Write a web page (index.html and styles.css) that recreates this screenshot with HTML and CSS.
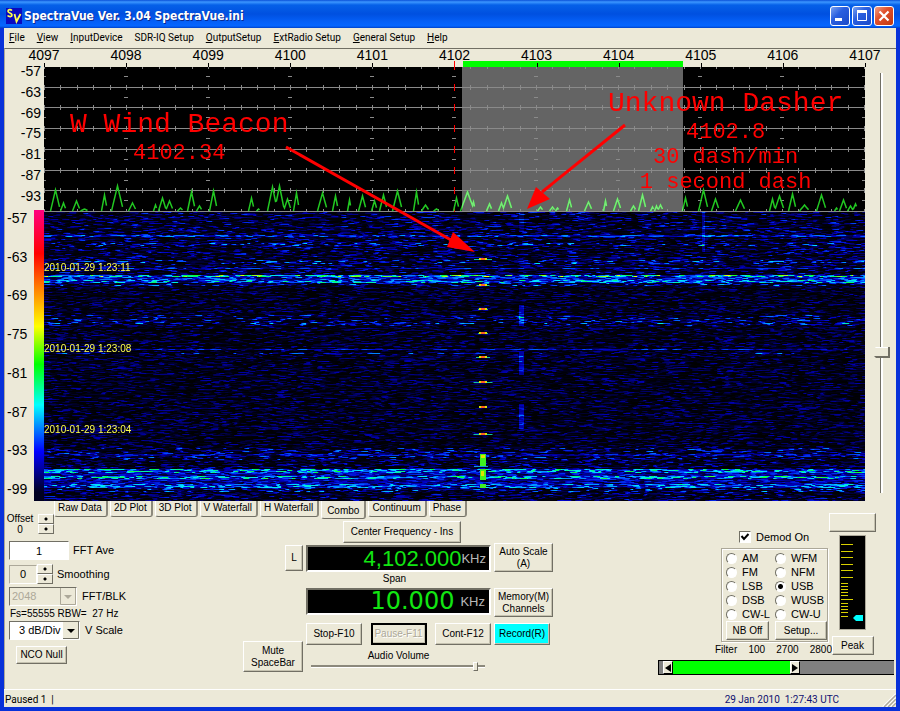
FILE: index.html
```html
<!DOCTYPE html>
<html lang="en">
<head>
  <meta charset="UTF-8" />
  <meta name="viewport" content="width=device-width, initial-scale=1.0" />
  <title>SpectraVue Ver. 3.04 SpectraVue.ini</title>
  <link rel="stylesheet" href="styles.css">
</head>
<body>
  <div class="window">
    <header class="titlebar">
      <svg class="logo" width="16" height="16" viewBox="0 0 16 16">
        <rect width="16" height="16" fill="#0a0ac0" />
        <path d="M6 2.5C4.5 1 2 1.5 2 3.3S6 5 6 7 3 9 1.500 7.500" fill="none" stroke="#ffff50" stroke-width="1.700" />
        <path d="M8.500 6l2 7.500L14.500 6" fill="none" stroke="#ffff50" stroke-width="1.800" />
      </svg>
      <h1>SpectraVue Ver. 3.04 SpectraVue.ini</h1>
      <div class="win-buttons">
        <button class="win-btn" aria-label="Minimize"><svg width="18" height="18" viewBox="0 0 18 18"><rect x="4" y="11" width="7" height="3" fill="#fff" /></svg></button>
        <button class="win-btn" aria-label="Maximize"><svg width="18" height="18" viewBox="0 0 18 18"><path d="M4.500 4v9.500h9V4" fill="none" stroke="#fff" /><rect x="4" y="3" width="10" height="3" fill="#fff" /></svg></button>
        <button class="win-btn close" aria-label="Close"><svg width="18" height="18" viewBox="0 0 18 18"><path d="M4.500 4.500l9 9M13.500 4.500l-9 9" stroke="#fff" stroke-width="2.200" /></svg></button>
      </div>
    </header>

    <nav class="menu">
      <a href="#"><u>F</u>ile</a>
      <a href="#"><u>V</u>iew</a>
      <a href="#"><u>I</u>nputDevice</a>
      <a href="#">SDR-IQ Setup</a>
      <a href="#"><u>O</u>utputSetup</a>
      <a href="#"><u>E</u>xtRadio Setup</a>
      <a href="#"><u>G</u>eneral Setup</a>
      <a href="#"><u>H</u>elp</a>
    </nav>

    <main>
      <section class="scope">
        <div class="scales">
          <div class="db-top">
            <span>-57</span><span>-63</span><span>-69</span><span>-75</span><span>-81</span><span>-87</span><span>-93</span>
          </div>
          <div class="db-bottom">
            <div class="db-list">
              <span>-57</span><span>-63</span><span>-69</span><span>-75</span><span>-81</span><span>-87</span><span>-93</span><span>-99</span>
            </div>
            <div class="palette"></div>
          </div>
        </div>

        <div class="plots">
          <div class="ruler">
            <div class="passband"></div>
            <span>4097</span><span>4098</span><span>4099</span><span>4100</span><span>4101</span><span class="tuned">4102</span><span>4103</span><span>4104</span><span>4105</span><span>4106</span><span>4107</span>
          </div>
          <div class="screen">
            <canvas id="spectrum" width="821" height="145"></canvas>
            <canvas id="waterfall" width="821" height="289"></canvas>
            <span class="stamp stamp-1">2010-01-29 1:23:11</span>
            <span class="stamp stamp-2">2010-01-29 1:23:08</span>
            <span class="stamp stamp-3">2010-01-29 1:23:04</span>
            <svg class="arrows" width="821" height="434" viewBox="0 0 821 434">
              <path d="M242 80L407 173M581 58L498 125" stroke="#f00" stroke-width="3" />
              <path d="M431 185L409 165L403 180ZM483 142L492 120L506 132Z" fill="#f00" />
            </svg>
            <div class="note note-beacon">
              <h2>W Wind Beacon</h2>
              <p>4102.34</p>
            </div>
            <div class="note note-dasher">
              <h2>Unknown Dasher</h2>
              <p>4102.8</p>
              <p>30 dash/min</p>
              <p>1 second dash</p>
            </div>
          </div>
        </div>

        <div class="gain">
          <input type="range" class="gain-slider" aria-label="Gain" min="0" max="100" value="67">
        </div>
      </section>

      <section class="controls">
        <div class="tabs">
          <button>Raw Data</button>
          <button>2D Plot</button>
          <button>3D Plot</button>
          <button>V Waterfall</button>
          <button>H Waterfall</button>
          <button class="active">Combo</button>
          <button>Continuum</button>
          <button>Phase</button>
        </div>

        <div class="panels">
          <div class="fft">
            <div class="line offset">
              <div class="offset-text">Offset<br>0</div>
              <div class="spin"><button aria-label="Offset up"></button><button aria-label="Offset down"></button></div>
            </div>
            <div class="line ave">
              <input type="text" id="fftAve" value="1">
              <label for="fftAve">FFT Ave</label>
            </div>
            <div class="line smooth">
              <input type="text" id="smoothing" value="0" readonly>
              <div class="spin"><button aria-label="Smoothing up"></button><button aria-label="Smoothing down"></button></div>
              <label for="smoothing">Smoothing</label>
            </div>
            <div class="line blk">
              <select id="fftBlk" disabled><option>2048</option></select>
              <label for="fftBlk">FFT/BLK</label>
            </div>
            <p class="rbw">Fs=55555 RBW=&nbsp; 27 Hz</p>
            <div class="line vscale">
              <select id="vScale"><option>3 dB/Div</option></select>
              <label for="vScale">V Scale</label>
            </div>
            <button class="btn nco">NCO Null</button>
          </div>

          <div class="tuning">
            <div class="tune-side">
              <button class="btn lock">L</button>
              <button class="btn mute">Mute<br>SpaceBar</button>
            </div>
            <div class="tune-mid">
              <button class="btn center-btn">Center Frequency - Ins</button>
              <div class="display"><span class="freq">4,102.000</span><span class="unit">KHz</span></div>
              <p class="span-label">Span</p>
              <div class="display"><span class="span-value">10.000</span><span class="unit unit-span">KHz</span></div>
              <div class="transport">
                <button class="btn">Stop-F10</button>
                <button class="btn default" disabled>Pause-F11</button>
                <button class="btn">Cont-F12</button>
              </div>
              <label class="volume-label" for="volume">Audio Volume</label>
              <input type="range" id="volume" class="volume" min="0" max="100" value="96">
            </div>
            <div class="tune-right">
              <button class="btn two-line">Auto Scale<br>(A)</button>
              <button class="btn two-line memory">Memory(M)<br>Channels</button>
              <button class="btn record">Record(R)</button>
            </div>
          </div>

          <div class="receiver">
            <div class="rx-top">
              <div class="demod">
                <label class="demod-on"><input type="checkbox" checked>Demod On</label>
                <fieldset class="modes">
                  <div class="mode-grid">
                    <label><input type="radio" name="mode">AM</label>
                    <label><input type="radio" name="mode">WFM</label>
                    <label><input type="radio" name="mode">FM</label>
                    <label><input type="radio" name="mode">NFM</label>
                    <label><input type="radio" name="mode">LSB</label>
                    <label><input type="radio" name="mode" checked>USB</label>
                    <label><input type="radio" name="mode">DSB</label>
                    <label><input type="radio" name="mode">WUSB</label>
                    <label><input type="radio" name="mode">CW-L</label>
                    <label><input type="radio" name="mode">CW-U</label>
                  </div>
                  <div class="mode-buttons">
                    <button class="btn">NB Off</button>
                    <button class="btn">Setup...</button>
                  </div>
                </fieldset>
                <div class="filter-text"><span>Filter</span><span>100</span><span>2700</span><span>2800</span></div>
              </div>
              <div class="level">
                <button class="btn blank" aria-label="Level"></button>
                <svg class="meter" width="27" height="95" viewBox="0 0 27 95">
                  <rect width="27" height="95" fill="#aca899" />
                  <rect x="1" y="1" width="25" height="93" fill="#000" />
                  <path d="M2 9.500h12M2 16.500h12M2 22.500h12M2 29.500h12M2 35.500h12M2 42.500h12M2 64.500h12M2 48.500h7M2 51.500h7M2 54.500h7M2 57.500h7M2 60.500h7M2 68.500h7M2 71.500h7M2 74.500h7M2 77.500h7M2 81.500h7" stroke="#d8d000" />
                  <path d="M14 83l3-3h7v6h-7z" fill="#0ff" />
                </svg>
                <button class="btn peak">Peak</button>
              </div>
            </div>
            <div class="filter-bar">
              <button class="handle" aria-label="Low cut"><svg width="6" height="8" viewBox="0 0 6 8"><path d="M6 0v8L0 4z" /></svg></button>
              <div class="filter-pass"></div>
              <button class="handle" aria-label="High cut"><svg width="6" height="8" viewBox="0 0 6 8"><path d="M0 0v8l6-4z" /></svg></button>
            </div>
          </div>
        </div>
      </section>
    </main>

    <footer class="status">
      <span>Paused 1 &nbsp;|</span>
      <time>29 Jan 2010 &nbsp;1:27:43 UTC</time>
      <svg class="grip" width="14" height="14" viewBox="0 0 14 14">
        <path d="M1 14L14 1M5 14l9-9M9 14l5-5" stroke="#fff" stroke-width="2" />
        <path d="M2 14L14 2M6 14l8-8M10 14l4-4" stroke="#aca899" stroke-width="1.500" />
      </svg>
    </footer>
  </div>
  <script src="script.js"></script>
</body>
</html>
```

FILE: styles.css
```css
* {
  box-sizing: border-box;
}

body {
  margin: 0;
  background: #0831d9;
  color: #000;
  font-family: 'Liberation Sans', Arial, sans-serif;
  font-size: 11px;
  line-height: 13px;
}

h1, h2, p {
  margin: 0;
}

button, input, select {
  font: inherit;
  color: inherit;
  margin: 0;
}

.window {
  display: flex;
  flex-direction: column;
  min-height: 100vh;
  border: 4px solid #0831d9;
  border-top: none;
  background: #ece9d8;
}

/* Title bar */
.titlebar {
  display: flex;
  align-items: center;
  gap: 2px;
  height: 28px;
  margin: 0 -4px;
  padding: 3px 6px 0 6px;
  background: linear-gradient(#0a50d8 0, #3c96ff 2px, #0560e8 5px, #0050e0 14px, #0560f8 22px, #0566ff 26px, #0040c8 28px);
}

.titlebar h1 {
  flex: 1;
  font-family: 'DejaVu Sans Condensed', 'DejaVu Sans', sans-serif;
  font-size: 12px;
  line-height: 16px;
  color: #fff;
  text-shadow: 1px 1px 0 #0a2a90;
}

.win-buttons {
  display: flex;
  gap: 2px;
}

.win-btn {
  width: 20px;
  height: 20px;
  padding: 0;
  border: 1px solid #fff;
  border-radius: 3px;
  background: linear-gradient(135deg, #7ba2f0, #2a5fe0 40%, #1b49c8);
}

.win-btn svg {
  display: block;
}

.win-btn.close {
  background: linear-gradient(135deg, #f0a088, #e0502c 40%, #c03810);
}

/* Menu */
.menu {
  display: flex;
  gap: 12px;
  height: 20px;
  padding: 3px 5px;
  font-family: Roboto, sans-serif;
  font-size: 10px;
}

.menu a {
  color: #000;
  text-decoration: none;
}

main {
  flex: 1;
  border-top: 1px solid #716f64;
  border-left: 1px solid #aca899;
}

/* Spectrum and waterfall */
.scope {
  display: flex;
  height: 452px;
}

.scales {
  width: 39px;
  display: flex;
  flex-direction: column;
  padding-top: 14px;
  font-size: 14px;
  line-height: 16px;
}

.db-top {
  display: flex;
  flex-direction: column;
  justify-content: space-between;
  height: 141px;
  margin-bottom: 6px;
  padding-right: 3px;
  text-align: right;
}

.db-bottom {
  flex: 1;
  display: flex;
  justify-content: space-between;
  padding-left: 2px;
}

.db-list {
  display: flex;
  flex-direction: column;
  justify-content: space-between;
  padding-bottom: 4px;
}

.palette {
  width: 10px;
  background: linear-gradient(#ff0080, #f00 15%, #ff8000 27%, #ff0 40%, #0f0 53%, #0ff 67%, #00f 83%, #000020 97%);
}

.plots {
  flex: 1;
  display: flex;
  flex-direction: column;
}

.ruler {
  position: relative;
  display: flex;
  justify-content: space-between;
  height: 18px;
  margin: 0 -20px;
  font-size: 14px;
  line-height: 13px;
}

.ruler span {
  position: relative;
  width: 40px;
  text-align: center;
}

.ruler span::after {
  content: "";
  position: absolute;
  left: 20px;
  bottom: 0;
  width: 1px;
  height: 4px;
  background: #000;
}

.ruler .tuned::after {
  height: 6px;
  background: #f00;
}

.passband {
  position: absolute;
  left: 51%;
  right: 23.5%;
  bottom: 0;
  height: 6px;
  background: #0f0;
}

.screen {
  position: relative;
  display: flex;
  flex-direction: column;
  overflow: hidden;
}

.screen canvas {
  display: block;
  width: 100%;
}

#spectrum {
  height: 145px;
}

#waterfall {
  height: 289px;
}

.stamp {
  position: absolute;
  left: 0;
  font-size: 10px;
  color: #ffff50;
}

.stamp-1 {
  top: 194px;
}

.stamp-2 {
  top: 275px;
}

.stamp-3 {
  top: 356px;
}

.arrows {
  position: absolute;
  left: 0;
  top: 0;
}

.note {
  position: absolute;
  color: #f00;
  text-align: center;
  font-family: 'Courier New', 'Liberation Mono', monospace;
  font-size: 22px;
  line-height: 25px;
}

.note h2 {
  font-size: 28px;
  font-weight: normal;
  line-height: 33px;
}

.note-beacon {
  left: 26px;
  top: 41px;
}

.note-dasher {
  left: 564px;
  top: 20px;
}

.gain {
  width: 31px;
  padding: 24px 5px 0 5px;
}

.gain-slider {
  appearance: none;
  writing-mode: vertical-lr;
  width: 20px;
  height: 420px;
  background: linear-gradient(90deg, transparent 10px, #716f64 10px, #716f64 11px, #fff 11px, #fff 13px, transparent 13px);
}

.gain-slider::-webkit-slider-thumb {
  appearance: none;
  width: 20px;
  height: 11px;
  background: linear-gradient(#fff 0, #fff 1px, #ece9d8 1px, #ece9d8 9px, #716f64 9px);
  border-right: 2px solid #716f64;
  clip-path: polygon(0 45%, 30% 0, 100% 0, 100% 100%, 30% 100%);
}

/* Tabs */
.tabs {
  display: flex;
  align-items: flex-start;
  gap: 2px;
  height: 18px;
  padding-left: 49px;
}

.tabs button {
  height: 16px;
  padding: 0 4px 1px 3px;
  border: 0 solid #716f64;
  border-left: 1px solid #fff;
  border-right: 2px solid #8c897c;
  border-bottom: 1px solid #716f64;
  border-radius: 0 0 3px 3px;
  background: #ece9d8;
  font-size: 10px;
  line-height: 14px;
}

.tabs .active {
  height: 18px;
  padding: 2px 5px 0 5px;
}

.btn {
  padding: 0;
  border: 1px solid;
  border-color: #fff #716f64 #716f64 #fff;
  background: #ece9d8;
  box-shadow: inset -1px -1px 0 #c5c2b0;
  font-size: 10px;
  line-height: 12px;
  white-space: nowrap;
}

.panels {
  display: flex;
}

/* FFT settings */
.fft {
  width: 238px;
  margin-top: -6px;
}

.line {
  display: flex;
  align-items: center;
  padding-left: 4px;
}

.line.offset {
  gap: 4px;
  padding-left: 1px;
  margin-bottom: 6px;
}

.offset-text {
  width: 28px;
  font-size: 10px;
  line-height: 11px;
  text-align: center;
}

.spin {
  display: flex;
  flex-direction: column;
}

.spin button {
  width: 16px;
  height: 10px;
  padding: 0;
  border: 1px solid;
  border-color: #fff #716f64 #716f64 #fff;
  background: radial-gradient(circle, #000 1px, #ece9d8 2px);
}

.line input {
  height: 19px;
  padding: 0;
  border: 1px solid;
  border-color: #716f64 #fff #fff #716f64;
  text-align: center;
}

.ave {
  gap: 4px;
  margin-bottom: 4px;
}

.ave input {
  width: 60px;
}

.smooth {
  margin-bottom: 3px;
}

.smooth input {
  width: 28px;
  background: #ece9d8;
  border-color: #aca899 #fff #fff #aca899;
}

.smooth label {
  padding-left: 4px;
}

.line select {
  appearance: none;
  height: 19px;
  padding: 0 0 0 2px;
  border: 1px solid;
  border-color: #716f64 #fff #fff #716f64;
  border-radius: 0;
  background: #fff url("data:image/svg+xml,%3Csvg xmlns='http://www.w3.org/2000/svg' width='16' height='17'%3E%3Cpath fill='%23ece9d8' d='M0 0h16v17H0z'/%3E%3Cpath fill='none' stroke='%23716f64' d='M0 16.500h15.500V0'/%3E%3Cpath d='M4 7h8l-4 4z'/%3E%3C/svg%3E") no-repeat right center;
}

.blk {
  gap: 5px;
}

.blk select {
  width: 68px;
}

.blk select:disabled {
  opacity: 1;
  color: #aca899;
  background: #ece9d8 url("data:image/svg+xml,%3Csvg xmlns='http://www.w3.org/2000/svg' width='16' height='17'%3E%3Cpath fill='none' stroke='%23aca899' d='M.5 0v16.500h15V0'/%3E%3Cpath fill='%23aca899' d='M4 7h8l-4 4z'/%3E%3C/svg%3E") no-repeat right center;
}

.rbw {
  padding-left: 5px;
  font-size: 10px;
  line-height: 15px;
}

.vscale {
  gap: 5px;
}

.vscale select {
  width: 71px;
  padding-left: 9px;
}

.nco {
  width: 51px;
  height: 18px;
  margin: 6px 0 0 11px;
}

/* Tuning */
.tuning {
  display: flex;
  gap: 3px;
}

.tune-side {
  width: 60px;
  display: flex;
  flex-direction: column;
  justify-content: space-between;
  align-items: flex-end;
  padding-top: 26px;
  height: 153px;
}

.lock {
  width: 18px;
  height: 26px;
}

.mute {
  width: 60px;
  height: 31px;
}

.tune-mid {
  width: 185px;
  display: flex;
  flex-direction: column;
  padding-top: 2px;
}

.center-btn {
  width: 118px;
  height: 22px;
  margin: 0 0 2px 37px;
}

.display {
  display: flex;
  align-items: center;
  justify-content: flex-end;
  height: 27px;
  padding-right: 3px;
  border: 2px solid;
  border-color: #716f64 #fff #fff #716f64;
  background: #000;
  color: #12e612;
}

.freq {
  font-size: 22px;
}

.span-value {
  font-family: 'DejaVu Sans', sans-serif;
  font-size: 24px;
}

.unit {
  font-size: 13px;
  color: #b8b8b8;
}

.unit-span {
  padding: 0 1px 0 6px;
}

.span-label {
  height: 16px;
  padding-right: 8px;
  font-size: 10px;
  text-align: center;
}

.transport {
  display: flex;
  justify-content: space-between;
  margin-top: 8px;
}

.transport .btn {
  width: 56px;
  height: 22px;
}

.transport .default {
  border: 2px solid #000;
  color: #aca899;
  text-shadow: 1px 1px 0 #fff;
}

.volume-label {
  margin-top: 4px;
  font-size: 10px;
  text-align: center;
}

.volume {
  appearance: none;
  width: 174px;
  height: 9px;
  margin: 0 0 0 5px;
  background: linear-gradient(transparent 3px, #8c897c 3px, #8c897c 5px, #fff 5px, #fff 6px, transparent 6px);
}

.volume::-webkit-slider-thumb {
  appearance: none;
  width: 5px;
  height: 9px;
  background: #ece9d8;
  border: 1px solid;
  border-color: #fff #716f64 #716f64 #fff;
}

.tune-right {
  width: 59px;
  display: flex;
  flex-direction: column;
  align-items: flex-start;
  padding-top: 24px;
}

.two-line {
  width: 59px;
  height: 29px;
  margin-bottom: 16px;
}

.memory {
  margin-bottom: 6px;
}

.record {
  width: 56px;
  height: 22px;
  background: #0ff;
}

/* Receiver */
.receiver {
  width: 238px;
  margin: -6px 0 0 auto;
}

.rx-top {
  display: flex;
  justify-content: flex-end;
  padding-right: 20px;
}

.demod {
  width: 113px;
  padding: 17px 1px 0 5px;
}

.demod-on {
  display: flex;
  align-items: center;
  gap: 5px;
  height: 14px;
  padding-left: 18px;
}

.demod-on input {
  appearance: none;
  width: 12px;
  height: 12px;
  border: 1px solid;
  border-color: #716f64 #fff #fff #716f64;
  background: #fff url("data:image/svg+xml,%3Csvg xmlns='http://www.w3.org/2000/svg' width='10' height='10'%3E%3Cpath fill='none' stroke='%23000' stroke-width='2' d='M1.500 4l2.500 3 4.500-5'/%3E%3C/svg%3E") no-repeat center;
}

.modes {
  margin: 4px 0 0 0;
  padding: 2px 0 1px 4px;
  border: 1px solid #aca899;
  box-shadow: inset 1px 1px 0 #fff, 1px 1px 0 #fff;
}

.mode-grid {
  display: grid;
  grid-template-columns: 49px 1fr;
}

.mode-grid label {
  display: flex;
  align-items: center;
  gap: 5px;
  height: 14px;
  white-space: nowrap;
}

.mode-grid input {
  appearance: none;
  flex: none;
  width: 11px;
  height: 11px;
  border: 1px solid;
  border-color: #716f64 #fff #fff #716f64;
  border-radius: 50%;
  background: #fff;
}

.mode-grid input:checked {
  background: radial-gradient(circle, #000 2px, #fff 3px);
}

.mode-buttons {
  display: flex;
  justify-content: space-between;
}

.mode-buttons .btn {
  width: 43px;
  height: 19px;
}

.mode-buttons .btn:last-child {
  width: 52px;
}

.filter-text {
  display: flex;
  justify-content: space-between;
  margin: 1px -4px 0 -6px;
  font-size: 10px;
  line-height: 14px;
}

.level {
  display: flex;
  flex-direction: column;
  align-items: center;
}

.blank {
  width: 47px;
  height: 19px;
}

.meter {
  margin: 3px 0 6px 0;
}

.peak {
  width: 42px;
  height: 19px;
}

.filter-bar {
  display: flex;
  height: 15px;
  margin: 3px 2px 0 0;
  padding-left: 4px;
  border: 1px solid #000;
  border-right: none;
  background: #808080;
}

.handle {
  display: flex;
  align-items: center;
  justify-content: center;
  width: 10px;
  height: 13px;
  padding: 0;
  border: 1px solid;
  border-color: #fff #000 #000 #fff;
  background: #ece9d8;
}

.filter-pass {
  width: 117px;
  background: #0f0;
}

/* Status bar */
.status {
  position: relative;
  display: flex;
  justify-content: space-between;
  height: 18px;
  padding: 3px 57px 0 1px;
  border-top: 1px solid #fff;
  font-family: Roboto, sans-serif;
  font-size: 10px;
}

.status time {
  color: #101070;
}

.grip {
  position: absolute;
  right: 0;
  bottom: 0;
}
```

FILE: script.js
```js
const WIDTH = 821;

// peaks of the trace: [x, height, half width]
const peaks = [
  [11, 21, 5], [19, 8, 3], [32, 10, 4], [40, 2, 4], [60, 16, 3], [73, 25, 6], [88, 8, 4],
  [111, 6, 2], [118, 13, 4], [125, 10, 4], [136, 3, 3], [147, 19, 4], [155, 5, 3], [169, 20, 4],
  [207, 13, 3], [214, 2, 2], [228, 24, 5], [235, 25, 5], [243, 12, 4], [252, 18, 3],
  [278, 18, 5], [291, 15, 3], [305, 11, 2], [318, 15, 4], [330, 10, 3], [339, 16, 4],
  [353, 20, 5], [372, 19, 3], [381, 6, 4], [392, 2, 3], [412, 13, 3], [423, 19, 7],
  [429, 9, 2], [445, 7, 3], [457, 8, 3], [463, 15, 5], [496, 4, 3], [508, 4, 3], [513, 3, 2],
  [525, 11, 3], [544, 9, 4], [561, 10, 2], [573, 12, 4], [589, 5, 3], [598, 16, 4],
  [608, 4, 2], [612, 5, 2], [616, 6, 3], [641, 13, 3], [659, 21, 5], [671, 12, 4],
  [696, 11, 5], [728, 12, 3], [735, 15, 5], [748, 17, 4], [760, 6, 5], [777, 16, 5],
  [792, 3, 2], [799, 11, 4], [806, 5, 3], [811, 7, 3]
];

let seed = 4102;
function rand() {
  seed = (seed * 1664525 + 1013904223) % 4294967296;
  return seed / 4294967296;
}

function drawTrace(ctx) {
  ctx.beginPath();
  for (let x = 0; x < 813; x++) {
    let h = 0;
    peaks.forEach(p => {
      h = Math.max(h, p[1] * (1 - Math.abs(x - p[0]) / p[2]));
    });
    if (h > 0) {
      ctx.lineTo(x + 0.5, 144 - h);
    } else {
      ctx.moveTo(x + 0.5, 144);
    }
  }
  ctx.stroke();
}

function drawSpectrum() {
  const ctx = document.getElementById("spectrum").getContext("2d");
  ctx.fillStyle = "#000";
  ctx.fillRect(0, 0, WIDTH, 145);
  ctx.fillStyle = "#646464";
  ctx.fillRect(418, 0, 221, 145);

  for (let row = 0; row <= 7; row++) {
    const y = Math.min(144, Math.round(row * 20.7 - 1));
    ctx.fillStyle = "#8a8a8a";
    if (row > 0) ctx.fillRect(0, y, WIDTH, 1);
    for (let i = 0; i <= 50; i++) {
      ctx.fillRect(Math.round(i * 16.4), y - 2, 1, 5);
    }
    for (let i = 0; i <= 10; i++) {
      ctx.fillRect(i * 82 - 2, y + 10, 4, 1);
    }
    ctx.fillStyle = "#f00";
    ctx.fillRect(410, y - 3, 1, 7);
  }

  ctx.lineWidth = 1.5;
  ctx.strokeStyle = "#22c822";
  drawTrace(ctx);
  ctx.save();
  ctx.beginPath();
  ctx.rect(418, 0, 221, 145);
  ctx.clip();
  ctx.strokeStyle = "#78e878";
  drawTrace(ctx);
  ctx.restore();
}

// signal strength to palette colour
function colour(v) {
  const stops = [[0, 0, 0, 0], [0.35, 0, 0, 200], [0.5, 0, 80, 255], [0.7, 0, 230, 255], [0.85, 0, 255, 60], [1, 255, 255, 0]];
  v = Math.max(0, Math.min(1, v));
  for (let i = 1; i < stops.length; i++) {
    if (v <= stops[i][0]) {
      const a = stops[i - 1];
      const b = stops[i];
      const t = (v - a[0]) / (b[0] - a[0]);
      return [1, 2, 3].map(k => a[k] + (b[k] - a[k]) * t);
    }
  }
  return [255, 255, 0];
}

// noise bands: [first row, last row, level]
const bands = [
  [0, 62, 0.18], [23, 24, 0.42], [31, 33, 0.26], [48, 51, 0.27], [56, 56, 0.38],
  [63, 64, 0.66], [65, 67, 0.42], [68, 70, 0.54], [71, 73, 0.26],
  [103, 113, 0.22], [111, 111, 0.29], [137, 137, 0.35], [141, 141, 0.24],
  [236, 247, 0.22], [242, 243, 0.33], [248, 256, 0.16],
  [257, 260, 0.56], [261, 263, 0.32], [264, 266, 0.58], [267, 271, 0.31],
  [272, 275, 0.5], [276, 279, 0.27], [280, 288, 0.17]
];

function drawWaterfall() {
  const ctx = document.getElementById("waterfall").getContext("2d");
  const img = ctx.createImageData(WIDTH, 289);
  for (let y = 0; y < 289; y++) {
    let level = 0.12;
    bands.forEach(b => {
      if (y >= b[0] && y <= b[1]) level = b[2];
    });
    let value = level;
    let target = level;
    let left = 0;
    for (let x = 0; x < WIDTH; x++) {
      if (left-- <= 0) {
        left = 1 + rand() * 5;
        const r = rand();
        target = level > 0.3 ? level * (0.1 + 1.45 * r) : level * (0.2 * r + 2.5 * Math.pow(r, 4));
      }
      value += (target - value) * 0.6;
      let v = value;
      const col = Math.abs(x - 477);
      if (col < 3 && ((y > 92 && y < 114) || (y > 139 && y < 163) || (y > 191 && y < 217))) {
        v += 0.26;
      }
      if (col < 3 && y < 20) v += 0.1;
      if (Math.abs(x - 659) < 2 && y < 40) v += 0.2;
      const c = colour(v);
      const i = (y * WIDTH + x) * 4;
      img.data[i] = c[0];
      img.data[i + 1] = c[1];
      img.data[i + 2] = c[2];
      img.data[i + 3] = 255;
    }
  }
  ctx.putImageData(img, 0, 0);

  // beacon dots: [row, tail width]
  [[46, 10], [72, 5], [96, 2], [120, 2], [144, 6], [169, 11], [194, 0], [221, 11]].forEach(d => {
    ctx.fillStyle = "#10c0a0";
    ctx.fillRect(435 - d[1] / 2, d[0] + 1, 8 + d[1], 1);
    ctx.fillStyle = "#d8e800";
    ctx.fillRect(435, d[0], 8, 2);
    ctx.fillStyle = "#ff6020";
    ctx.fillRect(437, d[0], 4, 2);
  });
  ctx.fillStyle = "#40f020";
  ctx.fillRect(436, 242, 6, 12);
  ctx.fillRect(436, 257, 6, 11);
  ctx.fillRect(436, 272, 6, 4);
  ctx.fillStyle = "#e0e000";
  ctx.fillRect(437, 243, 4, 3);
  ctx.fillRect(437, 259, 3, 5);
  ctx.fillStyle = "#10a0d0";
  ctx.fillRect(430, 254, 14, 1);
}

drawSpectrum();
drawWaterfall();
```
